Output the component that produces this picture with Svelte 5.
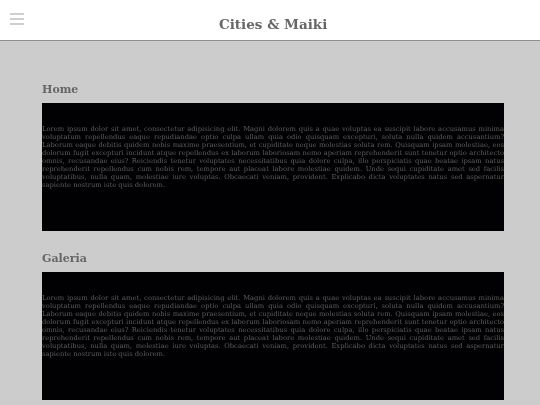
<script>
  const lorem = 'Lorem ipsum dolor sit amet, consectetur adipisicing elit. Magni dolorem quis a quae voluptas ea suscipit labore accusamus minima voluptatum repellendus eaque repudiandae optio culpa ullam quia odio quisquam excepturi, soluta nulla quidem accusantium? Laborum eaque debitis quidem nobis maxime praesentium, et cupiditate neque molestias soluta rem. Quisquam ipsam molestiae, eos dolorum fugit excepturi incidunt atque repellendus ex laborum laboriosam nemo aperiam reprehenderit sunt tenetur optio architecto omnis, recusandae eius? Reiciendis tenetur voluptates necessitatibus quia dolore culpa, illo perspiciatis quae beatae ipsam natus reprehenderit repellendus cum nobis rem, tempore aut placeat labore molestiae quidem. Unde sequi cupiditate amet sed facilis voluptatibus, nulla quam, molestiae iure voluptas. Obcaecati veniam, provident. Explicabo dicta voluptates natus sed aspernatur sapiente nostrum iste quis dolorem.';
  const sections = ['Home', 'Galeria'];
</script>

<header class="topbar">
  <div class="burger"><span></span><span></span><span></span></div>
  <h1>Cities &amp; Maiki</h1>
</header>

<main>
  {#each sections as name}
    <section>
      <h2>{name}</h2>
      <div class="card"><p>{lorem}</p></div>
    </section>
  {/each}
</main>

<style>
  :global(body) {
    margin: 0;
    background: #cccccd;
    font-family: "DejaVu Serif", serif;
    overflow: hidden;
  }

  .topbar {
    position: relative;
    height: 40px;
    background: #fff;
    border-bottom: 1px solid #8f8f8f;
    display: flex;
    align-items: center;
    justify-content: center;
    padding-left: 6px;
  }

  .burger {
    position: absolute;
    left: 10px;
    top: 13px;
    width: 14px;
    display: flex;
    flex-direction: column;
    gap: 3px;
  }

  .burger span {
    height: 2px;
    background: #cfcfcf;
  }

  h1 {
    margin: 8px 0 0;
    font-size: 13.5px;
    font-weight: 700;
    color: #666;
    will-change: transform;
  }

  main {
    padding: 41px 36px 0 42px;
    display: flex;
    flex-direction: column;
    gap: 20px;
  }

  h2 {
    margin: 0 0 6px;
    font-size: 11px;
    line-height: 15px;
    font-weight: 700;
    color: #666;
    will-change: transform;
  }

  .card {
    height: 128px;
    box-sizing: border-box;
    padding-top: 22px;
    background: #010103;
  }

  p {
    margin: 0;
    font-size: 6.75px;
    line-height: 8px;
    text-align: justify;
    color: #5e5e5e;
    will-change: transform;
  }
</style>
